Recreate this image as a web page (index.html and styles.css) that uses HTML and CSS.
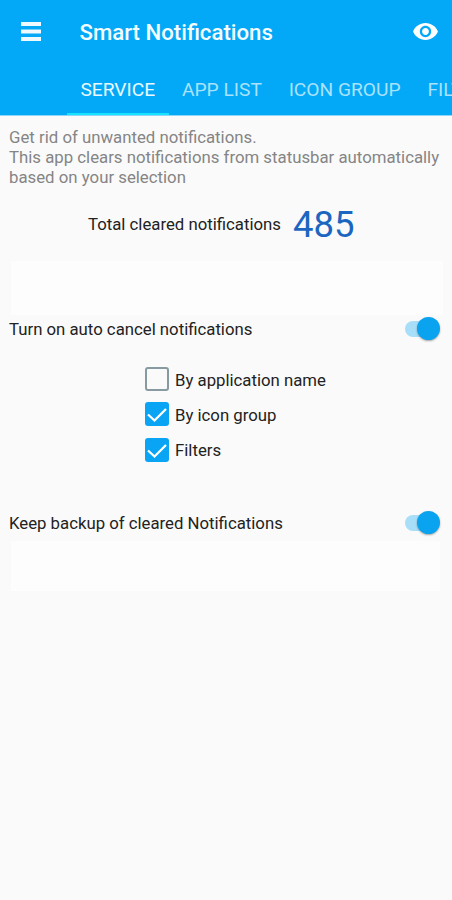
FILE: index.html
```html
<!DOCTYPE html>
<html lang="en">
<head>
<meta charset="utf-8">
<title>Smart Notifications</title>
<link rel="stylesheet" href="styles.css">
</head>
<body>
<header class="header">
  <div class="toolbar">
    <svg class="menu" viewBox="0 0 20 19"><path d="M0 0h20v4H0zM0 7.5h20v4H0zM0 15h20v4H0z"/></svg>
    <h1 class="title">Smart Notifications</h1>
    <svg class="eye" viewBox="1 4.5 22 15"><path d="M12 4.5C7 4.5 2.73 7.61 1 12c1.73 4.39 6 7.5 11 7.5s9.27-3.11 11-7.5c-1.73-4.39-6-7.5-11-7.5zM12 17c-2.76 0-5-2.24-5-5s2.24-5 5-5 5 2.24 5 5-2.24 5-5 5zm0-8c-1.66 0-3 1.34-3 3s1.34 3 3 3 3-1.34 3-3-1.34-3-3-3z"/></svg>
  </div>
  <nav class="tabs">
    <span class="tab active">SERVICE</span>
    <span class="tab">APP LIST</span>
    <span class="tab">ICON GROUP</span>
    <span class="tab">FILTERS</span>
  </nav>
</header>
<main class="content">
  <p class="intro"><span>Get rid of unwanted notifications.</span><br><span>This app clears notifications from statusbar automatically</span><br><span>based on your selection</span></p>
  <div class="total"><span class="label">Total cleared notifications</span><span class="count">485</span></div>
  <div class="panel"></div>
  <div class="row"><span class="label">Turn on auto cancel notifications</span><span class="switch"></span></div>
  <div class="options">
    <div class="option"><span class="box"></span><span class="label">By application name</span></div>
    <div class="option"><span class="box checked"><svg viewBox="0 0 24 24"><path d="M3 12.5l6.5 6L21 7"/></svg></span><span class="label">By icon group</span></div>
    <div class="option"><span class="box checked"><svg viewBox="0 0 24 24"><path d="M3 12.5l6.5 6L21 7"/></svg></span><span class="label">Filters</span></div>
  </div>
  <div class="row"><span class="label">Keep backup of cleared Notifications</span><span class="switch"></span></div>
  <div class="panel short"></div>
</main>
</body>
</html>
```
FILE: styles.css
```css
* { box-sizing: border-box; }
body {
  margin: 0;
  height: 900px;
  overflow: hidden;
  background: #fafafa;
  font-family: Roboto, "Liberation Sans", sans-serif;
  color: #222;
}
.header {
  height: 116px;
  background: #03a9f6;
  border-bottom: 1px solid #8fd6f8;
  overflow: hidden;
}
.toolbar {
  display: flex;
  align-items: center;
  height: 64px;
  padding: 0 14px 0 21px;
}
.menu { width: 20px; height: 19px; fill: #eefaff; margin-bottom: 1px; }
.title {
  margin: 0 0 0 38.5px;
  flex: 1;
  font-size: 22.2px;
  line-height: 28px;
  font-weight: 500;
  color: #f4fcff;
  white-space: nowrap;
}
.eye { width: 25px; height: 17px; fill: #fff; margin-bottom: 2px; }
.tabs { display: flex; height: 51px; padding-left: 67px; }
.tab {
  flex: none;
  padding: 0 13.4px;
  height: 51px;
  line-height: 52px;
  font-size: 19.2px;
  color: #a9e2fd;
  white-space: nowrap;
}
.tab.active { color: #e9f9ff; border-bottom: 2px solid #18e3ff; }
.content { padding: 11px 9px 0; }
.intro { margin: 0; font-size: 16.8px; line-height: 20px; color: #858585; white-space: nowrap; }
.label { font-size: 16.75px; line-height: 20px; white-space: nowrap; }
.total { display: flex; align-items: center; height: 60px; margin-top: 7px; padding-left: 79px; gap: 12px; }
.total .label { margin-bottom: 1px; }
.count { font-size: 36.5px; line-height: 42px; color: #1c66c1; padding-top: 1px; }
.panel { height: 54px; margin: 7px 0 0 2px; background: #fdfdfd; }
.row { display: flex; justify-content: space-between; align-items: center; height: 28px; padding-right: 3px; }
.switch {
  position: relative;
  width: 35px;
  height: 24px;
}
.switch::before {
  content: "";
  position: absolute;
  left: 0;
  top: 4px;
  width: 30px;
  height: 16px;
  border-radius: 8px;
  background: #a9def8;
}
.switch::after {
  content: "";
  position: absolute;
  right: 0;
  top: 0;
  width: 23px;
  height: 23px;
  border-radius: 50%;
  background: #09a3f0;
  box-shadow: 0 1px 2px rgba(0,0,0,.35);
}
.options { margin: 18px 0 41px 136px; }
.option { display: flex; align-items: center; height: 35.5px; gap: 6px; }
.option .label { padding-top: 2px; }
.box { width: 24px; height: 24px; border: 1.5px solid #7f929b; border-radius: 3px; }
.box:not(.checked) { border-width: 2px; border-color: #8799a1; }
.box.checked { border: 0; background: #09a5f4; }
.box svg { display: block; width: 24px; height: 24px; fill: none; stroke: #fff; stroke-width: 2.3; }
.option:last-child .label { padding-top: 1px; }
.panel.short { height: 50px; margin: 4px 3px 0 2px; }
```
